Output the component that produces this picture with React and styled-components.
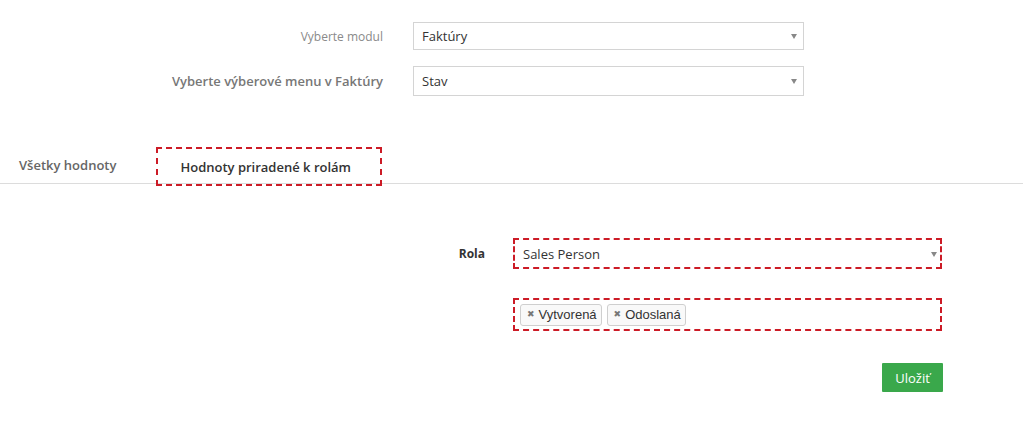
import React from "react";
import styled, { createGlobalStyle } from "styled-components";

const Global = createGlobalStyle`
  html, body {
    margin: 0;
    background: #fff;
    font-family: "Open Sans", "Liberation Sans", sans-serif;
  }
`;

const Page = styled.div`
  width: 1023px;
  height: 428px;
  overflow: hidden;
  padding-top: 22px;
  box-sizing: border-box;
`;

const TopForm = styled.div`
  display: grid;
  grid-template-columns: 383px 391px;
  column-gap: 30px;
  row-gap: 16px;
`;

const TopLabel = styled.div`
  display: flex;
  align-items: center;
  justify-content: flex-end;
  color: ${(p) => (p.$strong ? "#777" : "#8a8a8a")};
  font-weight: ${(p) => (p.$strong ? 600 : 400)};
  font-size: ${(p) => (p.$strong ? "13px" : "12px")};
`;

const SelectBox = styled.div`
  position: relative;
  display: flex;
  align-items: center;
  height: ${(p) => p.$h || 28}px;
  box-sizing: border-box;
  border: ${(p) => (p.$marked ? "2px dashed #cc1b26" : "1px solid #d4d4d4")};
  padding-left: 8px;
  font-size: 13px;
  color: #333;
  background: #fff;
`;

const Arrow = styled.span`
  position: absolute;
  right: ${(p) => p.$r || 6}px;
  top: 50%;
  margin-top: -2px;
  width: 0;
  height: 0;
  border-left: 3.5px solid transparent;
  border-right: 3.5px solid transparent;
  border-top: 5px solid #888;
`;

const TabBar = styled.div`
  margin-top: 51px;
  display: flex;
  height: 36px;
  border-bottom: 1px solid #dcdcdc;
`;

const Tab = styled.div`
  display: flex;
  align-items: center;
  box-sizing: border-box;
  font-size: 13px;
  font-weight: 600;
  color: ${(p) => (p.$active ? "#333" : "#666")};
  padding: ${(p) => (p.$active ? "0 29px 0 22px" : "0 19px")};
  height: ${(p) => (p.$active ? "39px" : "36px")};
  border: ${(p) => (p.$active ? "2px dashed #cc1b26" : "none")};
  margin-left: ${(p) => (p.$active ? "21px" : "0")};
  position: relative;
  z-index: 1;
`;

const RoleForm = styled.div`
  margin-top: 54px;
  display: grid;
  grid-template-columns: 485px 429px;
  column-gap: 28px;
  row-gap: 29px;
`;

const RoleLabel = styled.div`
  display: flex;
  align-items: center;
  justify-content: flex-end;
  font-size: 12px;
  font-weight: 700;
  color: #333;
`;

const TagsBox = styled.div`
  display: flex;
  align-items: center;
  gap: 5px;
  height: 33px;
  box-sizing: border-box;
  border: 2px dashed #cc1b26;
  padding-left: 5px;
`;

const Tag = styled.span`
  display: inline-flex;
  align-items: center;
  gap: 4px;
  height: 22px;
  box-sizing: border-box;
  padding: 0 4px 0 6px;
  border: 1px solid #cfcfcf;
  border-radius: 3px;
  background: #f9f9f9;
  font-family: "Liberation Sans", Arial, sans-serif;
  font-size: 13px;
  color: #333;
`;

const Remove = styled.span`
  font-family: "DejaVu Sans", sans-serif;
  font-size: 9px;
  color: #777;
  line-height: 1;
`;

const Actions = styled.div`
  grid-column: 2;
  display: flex;
  justify-content: flex-end;
  margin-top: 3px;
  margin-right: -1px;
`;

const SaveButton = styled.button`
  height: 29px;
  width: 61px;
  padding: 0;
  border: none;
  border-radius: 1px;
  background: #3aa84b;
  color: #fff;
  font-family: "Open Sans", sans-serif;
  font-size: 13px;
`;

export default function App() {
  return (
    <Page>
      <Global />
      <TopForm>
        <TopLabel>Vyberte modul</TopLabel>
        <SelectBox>
          Faktúry
          <Arrow />
        </SelectBox>
        <TopLabel $strong>Vyberte výberové menu v Faktúry</TopLabel>
        <SelectBox $h={30}>
          Stav
          <Arrow />
        </SelectBox>
      </TopForm>

      <TabBar>
        <Tab>Všetky hodnoty</Tab>
        <Tab $active>Hodnoty priradené k rolám</Tab>
      </TabBar>

      <RoleForm>
        <RoleLabel>Rola</RoleLabel>
        <SelectBox $marked $h={31}>
          Sales Person
          <Arrow $r={3} />
        </SelectBox>
        <div />
        <TagsBox>
          <Tag>
            <Remove>✖</Remove>Vytvorená
          </Tag>
          <Tag>
            <Remove>✖</Remove>Odoslaná
          </Tag>
        </TagsBox>
        <Actions>
          <SaveButton>Uložiť</SaveButton>
        </Actions>
      </RoleForm>
    </Page>
  );
}
